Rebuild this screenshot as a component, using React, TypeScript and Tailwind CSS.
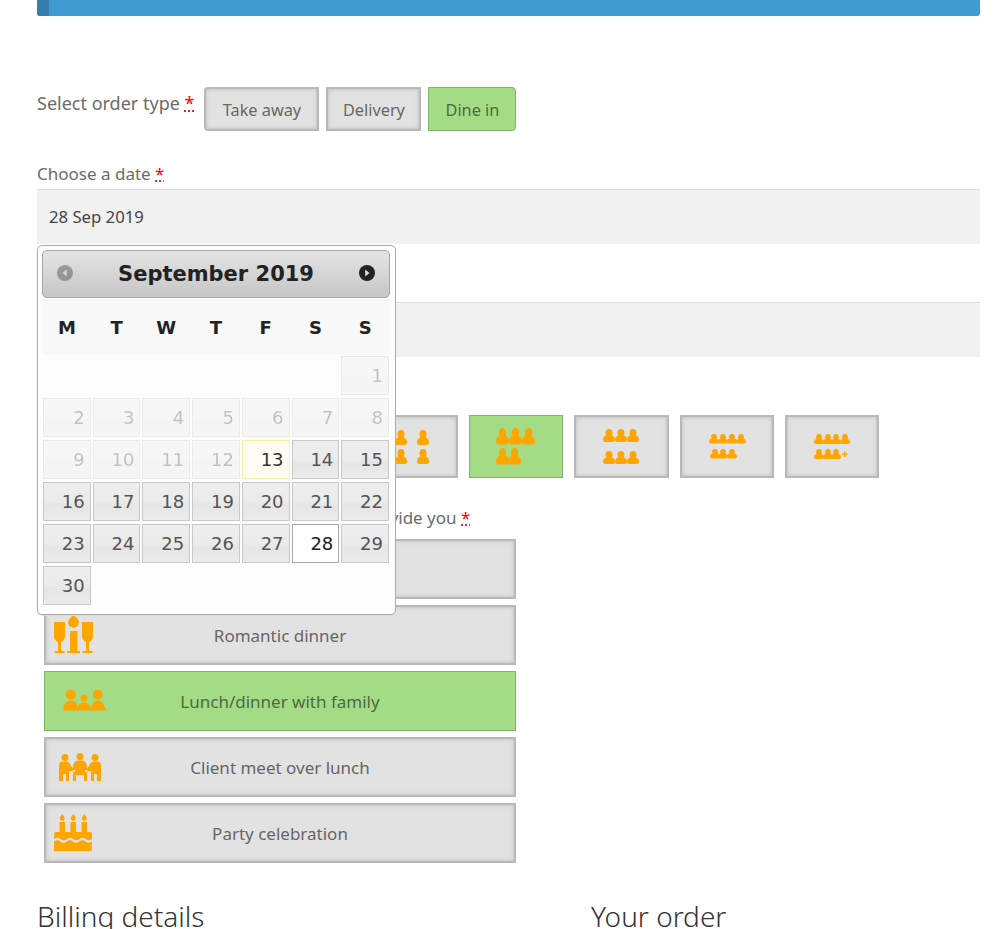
const FONT = "font-['Noto_Sans','Open_Sans',sans-serif]";
const CAL_FONT = "font-['DejaVu_Sans',sans-serif]";
const ORANGE = '#ffa500';

function Req() {
  return (
    <abbr className="text-[#f00] underline decoration-dotted decoration-[#f00]" title="required">
      *
    </abbr>
  );
}

function Person({ x, y, w, h }: { x: number; y: number; w: number; h: number }) {
  const top = y + h * 0.46;
  const low = y + h * 0.82;
  const bottom = y + h;
  return (
    <g fill={ORANGE}>
      <ellipse cx={x + w / 2} cy={y + h * 0.29} rx={w * 0.29} ry={h * 0.29} />
      <path
        d={`M${x} ${low}C${x} ${top + h * 0.12} ${x + w * 0.2} ${top} ${x + w / 2} ${top}C${x + w * 0.8} ${top} ${x + w} ${top + h * 0.12} ${x + w} ${low}Q${x + w} ${bottom} ${x + w * 0.8} ${bottom}H${x + w * 0.2}Q${x} ${bottom} ${x} ${low}Z`}
      />
    </g>
  );
}

type Spot = [number, number];

// x/y are measured from the button's top left corner
const partySizes: { spots: Spot[]; w: number; h: number; width: string; plus?: boolean; active?: boolean }[] = [
  { spots: [[41, 22]], w: 13, h: 16, width: 'w-[94px]' },
  { spots: [[33, 22], [49, 22]], w: 13, h: 16, width: 'w-[94px]' },
  { spots: [[27, 15], [49, 15], [38, 34]], w: 12, h: 15, width: 'w-[94px]' },
  { spots: [[31, 15], [53, 15], [31, 34], [53, 34]], w: 12, h: 15, width: 'w-[94px]' },
  { spots: [[27, 13], [40, 13], [53, 13], [27, 33], [39, 33]], w: 13, h: 16.5, width: 'w-[94px]', active: true },
  { spots: [[29, 14], [41, 14], [53, 14], [29, 36], [41, 36], [53, 36]], w: 12, h: 13, width: 'w-[95px]' },
  { spots: [[29, 19], [38, 19], [47, 19], [56, 19], [30, 34], [38, 34], [47, 34]], w: 10, h: 9.5, width: 'w-[94px]' },
  { spots: [[29, 19], [38, 19], [46, 19], [55, 19], [29, 34], [38, 34], [46, 34]], w: 10, h: 10, width: 'w-[94px]', plus: true },
];

function PartyButton({ size }: { size: (typeof partySizes)[number] }) {
  return (
    <button
      type="button"
      className={`h-[63px] shrink-0 ${size.width} ${
        size.active
          ? 'border border-[#82b36a] bg-[#a4dc85]'
          : 'border-2 border-[#b8b8b8] bg-[#e2e2e2] shadow-[inset_0_0_4px_#bbb]'
      }`}
    >
      <svg width="94" height="63" viewBox="0 0 94 63" className={`blur-[0.4px] ${size.active ? '-m-px' : '-m-[2px]'}`}>
        {size.spots.map(([x, y]) => (
          <Person key={`${x}-${y}`} x={x} y={y} w={size.w} h={size.h} />
        ))}
        {size.plus && (
          <path d="M57 38.500h2v-2h1.500v2h2v1.500h-2v2h-1.500v-2h-2z" fill={ORANGE} />
        )}
      </svg>
    </button>
  );
}

function CandleIcon() {
  return (
    <svg width="42" height="40" viewBox="0 0 42 40" fill={ORANGE}>
      <path d="M1 7h11v14q0 4-4 6v9h3.500v2H1.500v-2H5v-9q-4-2-4-6z" />
      <path d="M29 7h11v14q0 4-4 6v9h3.500v2h-10v-2H33v-9q-4-2-4-6z" />
      <path d="M20.500 0q5.500 4 5.500 7.500t-5.500 5.500q-5.500-2-5.500-5.500t5.500-7.500z" />
      <path d="M17 16h7.500v20H27v2H14v-2h3z" />
    </svg>
  );
}

function FamilyIcon() {
  return (
    <svg width="45" height="22" viewBox="0 0 45 22" fill={ORANGE}>
      <circle cx="8.700" cy="4.500" r="5" />
      <circle cx="35.700" cy="4.500" r="5" />
      <circle cx="22" cy="8" r="3.500" />
      <path d="M1 20.500C2 14 4 10.500 8.700 10.500C13.500 10.500 15 14 17 20.500z" />
      <path d="M28 20.500C30 14 31.500 10.500 35.700 10.500C40 10.500 42 14 44 20.500z" />
      <path d="M15 20.500C16 15 18 12.500 22 12.500C26 12.500 28 15 29 20.500z" />
    </svg>
  );
}

function MeetingIcon() {
  return (
    <svg width="43" height="29" viewBox="0 0 43 29" fill={ORANGE}>
      <circle cx="6" cy="4.500" r="3.500" />
      <circle cx="21" cy="3.500" r="3.500" />
      <circle cx="36" cy="4.500" r="3.500" />
      <path d="M0 28V12Q0 8.500 4 8.500H8Q10 8.500 12 13L14 16V18H10V28H7V21H4V28z" />
      <path d="M42 28V12Q42 8.500 38 8.500H34Q32 8.500 30 13L28 16V18H32V28H35V21H38V28z" />
      <path d="M15 10Q16 7.500 19 7.500H23Q26 7.500 27 10L29 17H26V19H28V28H25V22H17V28H14V19H16V17H13z" />
    </svg>
  );
}

function CakeIcon() {
  return (
    <svg width="39" height="38" viewBox="0 0 39 38" fill={ORANGE}>
      <path d="M8.300 0q2.500 3 2.500 4.500t-2.500 2.500q-2.500-1-2.500-2.500t2.500-4.500zM19.300 0q2.500 3 2.500 4.500t-2.500 2.500q-2.500-1-2.500-2.500t2.500-4.500zM30.300 0q2.500 3 2.500 4.500t-2.500 2.500q-2.500-1-2.500-2.500t2.500-4.500z" />
      <path d="M5.500 8h5.500v11h-5.500zM16.500 8h5.500v11h-5.500zM27.500 8h5.500v11h-5.500z" />
      <path d="M2 18H36Q38 18 38 20V25q-3.200 2.500-6.300 0t-6.300 0-6.300 0-6.300 0-6.300 0-6.300 0V20Q0 18 2 18z" />
      <path d="M0 27.500q3.200-2.500 6.300 0t6.300 0 6.300 0 6.300 0 6.300 0 6.300 0V37H0z" />
    </svg>
  );
}

const occasions = [
  { label: '', icon: null, left: 'pl-[14px]' },
  { label: 'Romantic dinner', icon: <CandleIcon />, left: 'pl-[7px]' },
  { label: 'Lunch/dinner with family', icon: <FamilyIcon />, left: 'pl-[17px]', active: true },
  { label: 'Client meet over lunch', icon: <MeetingIcon />, left: 'pl-[13px]' },
  { label: 'Party celebration', icon: <CakeIcon />, left: 'pl-[8px]' },
];

function OccasionButton({ item }: { item: (typeof occasions)[number] }) {
  return (
    <button
      type="button"
      className={`relative flex h-[60px] w-[472px] items-center text-[17px] ${item.left} ${
        item.active
          ? 'border border-[#82b36a] bg-[#a4dc85] text-[#4d6a3e]'
          : 'border-2 border-[#b8b8b8] bg-[#e2e2e2] text-[#666] shadow-[inset_0_0_4px_#bbb]'
      }`}
    >
      {item.icon}
      <span className="absolute inset-0 flex items-center justify-center pt-[2px]">{item.label}</span>
    </button>
  );
}

const weekdays = ['M', 'T', 'W', 'T', 'F', 'S', 'S'];
const days = Array.from({ length: 30 }, (_, i) => i + 1);

function DayCell({ day }: { day: number }) {
  let look =
    'border-[#c8c8c8] bg-[linear-gradient(#eeeeee_0%,#ebebeb_50%,#e6e6e6_60%,#ebebeb_100%)] text-[#555]';
  if (day < 13) {
    look =
      'border-[#c8c8c8] bg-[linear-gradient(#eeeeee_0%,#ebebeb_50%,#e6e6e6_60%,#ebebeb_100%)] text-[#555] opacity-35';
  } else if (day === 13) {
    look = 'border-[#fbeea0] bg-[#fefcf3] text-[#333]';
  } else if (day === 28) {
    look = 'border-[#a8a8a8] bg-white text-[#212121]';
  }
  return (
    <div
      className={`flex h-[39px] items-center justify-end border pr-[5px] text-[18px] ${look}`}
      style={day === 1 ? { gridColumnStart: 7 } : undefined}
    >
      {day}
    </div>
  );
}

function Calendar() {
  return (
    <div
      className={`absolute left-[37px] top-[245px] z-10 h-[370px] w-[359px] rounded-[5px] border border-[#aaa] bg-[#fdfdfd] pb-1 pl-1 pr-[5px] pt-1 shadow-[0_1px_1px_#ddd] ${CAL_FONT}`}
    >
      <div className="flex h-[48px] items-center justify-between rounded-[5px] border border-[#a6a6a6] bg-[linear-gradient(#e4e4e4,#c6c6c6)] px-[14px] pb-[2px] text-[#222]">
        <svg width="16" height="16" viewBox="0 0 16 16" className="opacity-35">
          <circle cx="8" cy="8" r="8" fill="#222" />
          <path d="M9.800 4.500v7L5.500 8z" fill="#ddd" />
        </svg>
        <span className="mt-[3px] text-[21px] font-bold leading-none">September 2019</span>
        <svg width="16" height="16" viewBox="0 0 16 16">
          <circle cx="8" cy="8" r="8" fill="#222" />
          <path d="M6.200 4.500v7L10.500 8z" fill="#ddd" />
        </svg>
      </div>
      <div className="mt-[1px] grid h-[56px] grid-cols-7 items-center bg-[#f8f8f8] text-center text-[18px] font-bold text-[#222]">
        {weekdays.map((d, i) => (
          <span key={i}>{d}</span>
        ))}
      </div>
      <div className="mt-[1px] grid grid-cols-7 gap-x-[2px] gap-y-[3px] px-[1px]">
        {days.map((d) => (
          <DayCell key={d} day={d} />
        ))}
      </div>
    </div>
  );
}

export default function App() {
  return (
    <div className={`relative h-[929px] overflow-hidden bg-white text-[#6b6b6b] ${FONT}`}>
      <div className="ml-[37px] mr-[27px] h-4 overflow-hidden rounded-b-[3px] bg-[#3d9bd1]">
        <div className="h-full w-3 bg-[#357fb0]" />
      </div>

      <div className="pl-[37px] pr-[27px]">
        <div className="mt-[71px] flex h-[44px] items-start">
          <span className="mr-[10px] mt-[2px] text-[18px] leading-[28px]">
            Select order type <Req />
          </span>
          <button
            type="button"
            className="h-[44px] w-[115px] rounded-l-[4px] border-2 border-[#b8b8b8] bg-[#e2e2e2] pt-[2px] text-[16.3px] text-[#666] shadow-[inset_0_0_4px_#bbb]"
          >
            Take away
          </button>
          <button
            type="button"
            className="ml-[7px] h-[44px] w-[95px] border-2 border-[#b8b8b8] bg-[#e2e2e2] pt-[2px] text-[16.3px] text-[#666] shadow-[inset_0_0_4px_#bbb]"
          >
            Delivery
          </button>
          <button
            type="button"
            className="ml-[7px] h-[44px] w-[88px] rounded-r-[4px] border border-[#82b36a] bg-[#a4dc85] pt-[2px] text-[16.3px] text-[#4d6a3e]"
          >
            Dine in
          </button>
        </div>

        <div className="mt-[29px] h-[29px] text-[17px] leading-[28px]">
          Choose a date <Req />
        </div>
        <div className="flex h-[55px] items-center border-t border-[#ddd] bg-[#f1f1f1] pl-[12px] text-[16.7px] text-[#444]">
          28 Sep 2019
        </div>

        <div className="mt-[58px] h-[55px] border-t border-[#ddd] bg-[#f1f1f1]" />

        <div className="ml-[12px] mt-[58px] flex gap-[11px]">
          {partySizes.map((size, i) => (
            <PartyButton key={i} size={size} />
          ))}
        </div>

        <div className="mt-[26px] h-[35px] text-[17px] leading-[28px]">
          Let us know the occasion so we can best provide you <Req />
        </div>
        <div className="ml-[7px] flex flex-col gap-[6px]">
          {occasions.map((item, i) => (
            <OccasionButton key={i} item={item} />
          ))}
        </div>

        <div className="mt-[33px] flex text-[28px] font-light leading-[40px] text-[#333]">
          <h3 className="w-[554px]">Billing details</h3>
          <h3>Your order</h3>
        </div>
      </div>

      <Calendar />
    </div>
  );
}
